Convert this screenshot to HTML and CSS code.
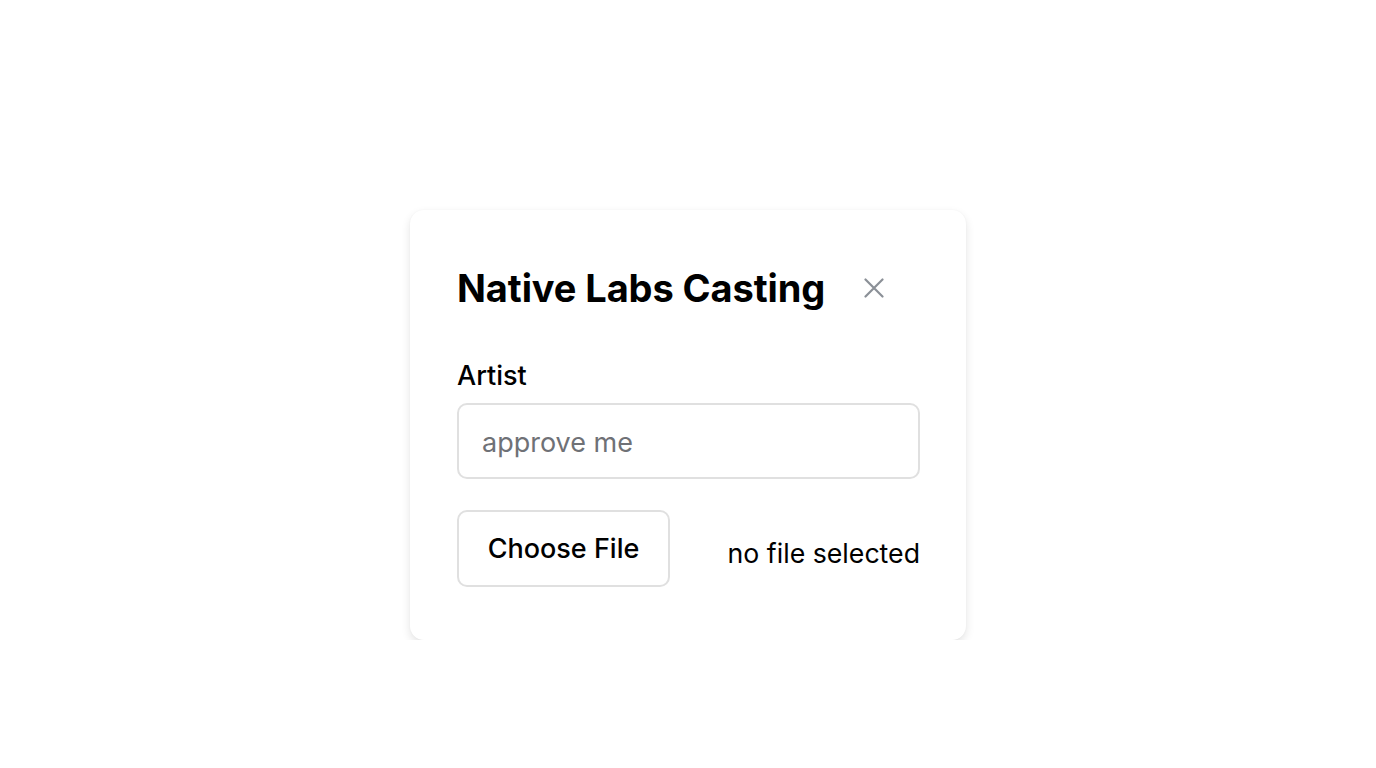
FILE: index.html
```html
<!DOCTYPE html>
<html>
<head>
<meta charset="utf-8">
<link rel="stylesheet" href="styles.css">
</head>
<body>
<div class="card">
  <div class="header">
    <h1 class="title">Native Labs Casting</h1>
    <button class="close" aria-label="Close">
      <svg width="20" height="20" viewBox="0 0 20 20"><path d="M1.5 1.5 L18.5 18.5 M18.5 1.5 L1.5 18.5" stroke="#8b9097" stroke-width="2.2" stroke-linecap="round" fill="none"/></svg>
    </button>
  </div>
  <label class="label">Artist</label>
  <div class="input">approve me</div>
  <div class="file-row">
    <div class="file-btn">Choose File</div>
    <span class="file-status">no file selected</span>
  </div>
</div>
</body>
</html>
```
FILE: styles.css
```css
html, body {
  margin: 0;
  padding: 0;
  background: #ffffff;
  font-family: Inter, "Noto Sans", sans-serif;
  color: #000;
}
body {
  display: flex;
  justify-content: center;
  padding-top: 210px;
}
.card {
  width: 556px;
  box-sizing: border-box;
  padding: 50px 46px 53px 47px;
  background: #fff;
  border-radius: 14px;
  box-shadow: 0 4px 10px rgba(0,0,0,0.11), 0 0 2px rgba(0,0,0,0.04);
}
.header {
  display: flex;
  align-items: center;
  gap: 39px;
  margin-bottom: 43px;
}
.title {
  margin: 0;
  font-size: 38px;
  font-weight: 700;
  line-height: 56px;
  letter-spacing: -0.1px;
}
.close {
  border: none;
  background: none;
  padding: 0;
  margin: 0;
  width: 20px;
  height: 20px;
  display: flex;
}
.label {
  display: block;
  font-size: 27px;
  font-weight: 500;
  line-height: 34px;
  margin-bottom: 10px;
}
.input {
  height: 76px;
  box-sizing: border-box;
  border: 2px solid #e0e0e0;
  border-radius: 10px;
  padding: 3px 23px 0;
  display: flex;
  align-items: center;
  font-size: 27px;
  color: #6f7176;
}
.file-row {
  margin-top: 31px;
  display: flex;
  align-items: center;
  justify-content: space-between;
}
.file-btn {
  width: 213px;
  height: 77px;
  box-sizing: border-box;
  border: 2px solid #e0e0e0;
  border-radius: 10px;
  display: flex;
  align-items: center;
  justify-content: center;
  font-size: 27px;
  font-weight: 500;
}
.file-status {
  font-size: 26.7px;
  padding-top: 8px;
}
```
